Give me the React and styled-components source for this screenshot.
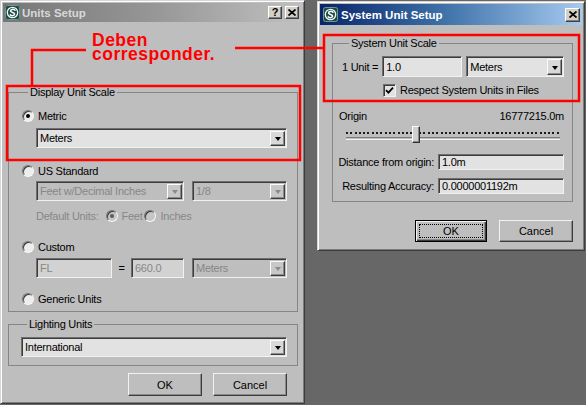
import React from "react";
import styled, { createGlobalStyle } from "styled-components";

const GlobalStyle = createGlobalStyle`
  html, body { margin: 0; padding: 0; }
  body {
    background: #676767;
    font-family: "Liberation Sans", Arial, sans-serif;
  }
`;

const DIALOG = "#bebebe";
const FIELD = "#e2e2e2";
const DIM = "#878787";

const Desktop = styled.div`
  position: relative;
  width: 586px;
  height: 405px;
  overflow: hidden;
  display: flex;
  align-items: flex-start;
  gap: 12px;
  background: #676767;
`;

const Window = styled.div`
  box-sizing: border-box;
  flex: none;
  width: ${(p) => p.$w}px;
  height: ${(p) => p.$h}px;
  margin-top: ${(p) => p.$top || 0}px;
  background: ${DIALOG};
  border: 1px solid;
  border-color: #d6d6d6 #3c3c3c #3c3c3c #d6d6d6;
  box-shadow: inset 1px 1px 0 #fff, inset -1px -1px 0 #7c7c7c;
  padding: 2px;
  display: flex;
  flex-direction: column;
  font-size: 11px;
  letter-spacing: -0.25px;
  color: #000;
  overflow: hidden;
`;

const TitleBar = styled.div`
  flex: none;
  height: ${(p) => p.$h}px;
  display: flex;
  align-items: center;
  gap: ${(p) => p.$gap}px;
  padding: 0 ${(p) => p.$padR}px 0 ${(p) => p.$padL}px;
  background: ${(p) =>
    p.$active
      ? "linear-gradient(90deg, #0a246a 0%, #3a6ea5 45%, #a6caf0 100%)"
      : "linear-gradient(90deg, #777 0%, #969696 50%, #c0c0c0 100%)"};
  color: ${(p) => (p.$active ? "#fff" : "#d8d8d8")};
`;

const TitleText = styled.span`
  font: bold 11.5px "Liberation Sans", Arial, sans-serif;
  letter-spacing: 0;
  flex: 1;
  white-space: nowrap;
`;

const TitleButtons = styled.div`
  display: flex;
  gap: 3px;
`;

const TitleButton = styled.span`
  box-sizing: border-box;
  width: ${(p) => p.$w}px;
  height: ${(p) => p.$h}px;
  display: flex;
  align-items: center;
  justify-content: center;
  background: #d4d0c8;
  border: 1px solid;
  border-color: #fff #404040 #404040 #fff;
  box-shadow: inset -1px -1px 0 #808080;
  color: #000;
  font: bold 11px "Liberation Sans", Arial, sans-serif;
  line-height: 1;
`;

const Body = styled.div`
  flex: 1;
  display: flex;
  flex-direction: column;
  padding: ${(p) => p.$pad};
`;

const Group = styled.fieldset`
  margin: ${(p) => p.$mt || 0}px 0 0 0;
  padding: ${(p) => p.$pad};
  border: 1px solid #868686;
  display: flex;
  flex-direction: column;
  min-width: 0;
`;

const Legend = styled.legend`
  padding: 0 2px;
  margin-left: ${(p) => p.$ml || 0}px;
  line-height: 13px;
`;

const RadioRow = styled.div`
  display: flex;
  align-items: center;
  gap: 4px;
  height: 14px;
  margin-top: ${(p) => p.$mt || 0}px;
  color: ${(p) => (p.$dim ? DIM : "#000")};
`;

const Radio = styled.span`
  box-sizing: border-box;
  flex: none;
  width: 12px;
  height: 12px;
  border-radius: 50%;
  background: ${(p) => (p.$dim ? "#c6c6c6" : "#ededed")};
  border: 1px solid;
  border-color: #767676 #f6f6f6 #f6f6f6 #767676;
  box-shadow: inset 1px 1px 0 #3a3a3a;
  display: flex;
  align-items: center;
  justify-content: center;
  &::after {
    content: "";
    display: ${(p) => (p.$checked ? "block" : "none")};
    width: 4px;
    height: 4px;
    border-radius: 50%;
    background: ${(p) => (p.$dim ? "#5a5a5a" : "#000")};
  }
`;

const Indent = styled.div`
  display: flex;
  align-items: center;
  gap: ${(p) => (p.$gap === undefined ? 8 : p.$gap)}px;
  height: ${(p) => (p.$h ? `${p.$h}px` : "auto")};
  margin: ${(p) => p.$mt || 0}px 0 0 ${(p) => (p.$ml === undefined ? 14 : p.$ml)}px;
  color: ${(p) => (p.$dim ? DIM : "#000")};
`;

const Field = styled.div`
  box-sizing: border-box;
  display: flex;
  align-items: center;
  height: ${(p) => p.$h || 20}px;
  width: ${(p) => (p.$w ? `${p.$w}px` : "auto")};
  flex: ${(p) => (p.$w ? "none" : 1)};
  margin-left: ${(p) => p.$ml || 0}px;
  padding-left: 3px;
  border: 1px solid;
  border-color: #6e6e6e #f2f2f2 #f2f2f2 #6e6e6e;
  box-shadow: inset 1px 1px 0 #3c3c3c;
  background: ${(p) => (p.$dim ? (p.$edit ? "#d2d2d2" : DIALOG) : FIELD)};
  color: ${(p) => (p.$dim ? DIM : "#000")};
  white-space: nowrap;
  overflow: hidden;
`;

const ArrowButton = styled.span`
  box-sizing: border-box;
  margin-left: auto;
  margin-right: 1px;
  width: 15px;
  height: calc(100% - 3px);
  margin-top: 1px;
  display: flex;
  align-items: center;
  justify-content: center;
  background: ${(p) => (p.$dim ? "#c8c8c8" : "#d9d9d9")};
  border: 1px solid;
  border-color: #fbfbfb #3e3e3e #3e3e3e #fbfbfb;
  box-shadow: inset -1px -1px 0 #8a8a8a;
  &::after {
    content: "";
    border-left: 3.5px solid transparent;
    border-right: 3.5px solid transparent;
    border-top: 4px solid ${(p) => (p.$dim ? "#8a8a8a" : "#000")};
    margin-top: 1px;
  }
`;

const Equals = styled.span`
  width: 19px;
  text-align: center;
  color: #000;
`;

const Dim = styled.span`
  color: ${DIM};
  margin: 0 ${(p) => p.$mr || 0}px 0 ${(p) => p.$ml || 0}px;
`;

const ButtonRow = styled.div`
  display: flex;
  justify-content: flex-end;
  gap: ${(p) => p.$gap}px;
  margin-top: ${(p) => p.$mt}px;
  padding-right: ${(p) => p.$pr}px;
`;

const Button = styled.button`
  box-sizing: border-box;
  width: ${(p) => p.$w}px;
  height: ${(p) => p.$h}px;
  padding: 0;
  font: 11px "Liberation Sans", Arial, sans-serif;
  color: #000;
  background: ${DIALOG};
  border: 1px solid;
  border-color: ${(p) =>
    p.$default ? "#000" : "#f2f2f2 #3c3c3c #3c3c3c #f2f2f2"};
  box-shadow: ${(p) =>
    p.$default
      ? "inset 1px 1px 0 #f2f2f2, inset -1px -1px 0 #3c3c3c, inset -2px -2px 0 #8a8a8a"
      : "inset -1px -1px 0 #8a8a8a"};
  outline: ${(p) => (p.$default ? "1px dotted #000" : "none")};
  outline-offset: -5px;
`;

const UnitRow = styled.div`
  display: flex;
  align-items: center;
  gap: 4px;
`;

const CheckRow = styled.div`
  display: flex;
  align-items: center;
  gap: 4px;
  height: 14px;
  margin: 6px 0 0 41px;
`;

const CheckBox = styled.span`
  box-sizing: border-box;
  width: 13px;
  height: 13px;
  flex: none;
  display: flex;
  align-items: center;
  justify-content: center;
  background: ${FIELD};
  border: 1px solid;
  border-color: #6e6e6e #f2f2f2 #f2f2f2 #6e6e6e;
  box-shadow: inset 1px 1px 0 #3c3c3c;
`;

const OriginRow = styled.div`
  display: flex;
  justify-content: space-between;
  height: 14px;
  line-height: 14px;
  margin: 12px 0 0 -3px;
`;

const Slider = styled.div`
  position: relative;
  height: 17px;
  margin: 3px 4px 0 4px;
  display: flex;
  flex-direction: column;
`;

const Ticks = styled.div`
  height: 2px;
  margin-top: 6px;
  background: repeating-linear-gradient(90deg, #1a1a1a 0 2px, transparent 2px 4.3px);
`;

const Track = styled.div`
  height: 1px;
  margin-top: 3px;
  border-top: 1px solid #7a7a7a;
  border-bottom: 1px solid #f2f2f2;
`;

const Thumb = styled.span`
  position: absolute;
  top: 0;
  left: ${(p) => p.$at}px;
  box-sizing: border-box;
  width: 8px;
  height: 17px;
  background: #cfcfcf;
  border: 1px solid;
  border-color: #fafafa #2e2e2e #2e2e2e #fafafa;
  box-shadow: inset -1px -1px 0 #868686;
`;

const FormGrid = styled.div`
  display: grid;
  grid-template-columns: 97px 1fr;
  column-gap: 4px;
  row-gap: 8px;
  align-items: center;
  margin: 11px 0 0 -5px;
`;

const FormLabel = styled.span`
  justify-self: end;
  white-space: nowrap;
`;

const Overlay = styled.div`
  position: absolute;
  inset: 0;
  pointer-events: none;
`;

const Note = styled.div`
  position: absolute;
  left: 92px;
  top: 33px;
  color: #ff0000;
  font: bold 17.5px/14px "Liberation Sans", Arial, sans-serif;
  letter-spacing: 0.5px;
`;

const MaxIcon = () => (
  <svg width="15" height="15" viewBox="0 0 15 15">
    <rect x="0" y="0" width="15" height="15" rx="2" fill="#1d4c47" />
    <rect x="0.5" y="0.5" width="14" height="14" rx="2" fill="none" stroke="#6f9893" />
    <circle cx="7.5" cy="7.5" r="5.2" fill="none" stroke="#eef4f3" strokeWidth="1.3" />
    <path
      d="M10 5.2 C8.6 3.8 5.4 4.2 5.6 6.2 C5.8 7.8 9.6 7.2 9.6 9.1 C9.6 10.9 6.6 11.1 5.2 9.9"
      fill="none"
      stroke="#fff"
      strokeWidth="1.5"
      strokeLinecap="round"
    />
  </svg>
);

const CloseGlyph = () => (
  <svg width="8" height="7" viewBox="0 0 8 7">
    <path d="M0.5 0.5 L7.5 6.5 M7.5 0.5 L0.5 6.5" stroke="#000" strokeWidth="1.7" />
  </svg>
);

const CheckGlyph = () => (
  <svg width="9" height="9" viewBox="0 0 9 9">
    <path d="M1 4.2 L3.4 6.6 L8 1.6" fill="none" stroke="#000" strokeWidth="1.8" />
  </svg>
);

const Combo = ({ value, w, h, dim, ml }) => (
  <Field $w={w} $h={h} $dim={dim} $ml={ml}>
    {value}
    <ArrowButton $dim={dim} />
  </Field>
);

const UnitsSetup = () => (
  <Window $w={305} $h={404}>
    <TitleBar $h={19} $gap={2} $padL={2} $padR={3}>
      <MaxIcon />
      <TitleText>Units Setup</TitleText>
      <TitleButtons>
        <TitleButton $w={14} $h={13}>?</TitleButton>
        <TitleButton $w={14} $h={13}>
          <CloseGlyph />
        </TitleButton>
      </TitleButtons>
    </TitleBar>
    <Body $pad="64px 4px 0 5px">
      <Group $pad="10px 10px 5px 13px">
        <Legend $ml={6}>Display Unit Scale</Legend>
        <RadioRow>
          <Radio $checked />
          Metric
        </RadioRow>
        <Indent $mt={5}>
          <Combo value="Meters" />
        </Indent>
        <RadioRow $mt={16}>
          <Radio />
          US Standard
        </RadioRow>
        <Indent $mt={3}>
          <Combo dim w={148} value="Feet w/Decimal Inches" />
          <Combo dim value="1/8" />
        </Indent>
        <Indent $mt={8} $gap={0} $h={14} $dim>
          <Dim $mr={7}>Default Units:</Dim>
          <Radio $dim $checked />
          <Dim $ml={4} $mr={1}>Feet</Dim>
          <Radio $dim />
          <Dim $ml={5}>Inches</Dim>
        </Indent>
        <RadioRow $mt={17}>
          <Radio />
          Custom
        </RadioRow>
        <Indent $mt={4} $gap={0}>
          <Field $w={76} $dim $edit>FL</Field>
          <Equals>=</Equals>
          <Field $w={53} $dim $edit>660.0</Field>
          <Combo dim ml={8} value="Meters" />
        </Indent>
        <RadioRow $mt={14}>
          <Radio />
          Generic Units
        </RadioRow>
      </Group>
      <Group $mt={6} $pad="6px 10px 8px 12px">
        <Legend $ml={6}>Lighting Units</Legend>
        <Indent $ml={0}>
          <Combo value="International" />
        </Indent>
      </Group>
      <ButtonRow $gap={11} $mt={7} $pr={11}>
        <Button $w={74} $h={23}>OK</Button>
        <Button $w={74} $h={23}>Cancel</Button>
      </ButtonRow>
    </Body>
  </Window>
);

const SystemUnitSetup = () => (
  <Window $w={268} $h={250} $top={1}>
    <TitleBar $active $h={21} $gap={3} $padL={3} $padR={2}>
      <MaxIcon />
      <TitleText>System Unit Setup</TitleText>
      <TitleButton $w={15} $h={14}>
        <CloseGlyph />
      </TitleButton>
    </TitleBar>
    <Body $pad="12px 9px 0 12px">
      <Group $pad="6px 8px 7px 9px">
        <Legend $ml={7}>System Unit Scale</Legend>
        <UnitRow>
          <span>1 Unit =</span>
          <Field $w={80} $h={21}>1.0</Field>
          <Combo h={21} value="Meters" />
        </UnitRow>
        <CheckRow>
          <CheckBox>
            <CheckGlyph />
          </CheckBox>
          Respect System Units in Files
        </CheckRow>
        <OriginRow>
          <span>Origin</span>
          <span>16777215.0m</span>
        </OriginRow>
        <Slider>
          <Ticks />
          <Track />
          <Thumb $at={66} />
        </Slider>
        <FormGrid>
          <FormLabel>Distance from origin:</FormLabel>
          <Field $h={16}>1.0m</Field>
          <FormLabel>Resulting Accuracy:</FormLabel>
          <Field $h={16}>0.0000001192m</Field>
        </FormGrid>
      </Group>
      <ButtonRow $gap={12} $mt={18} $pr={0}>
        <Button $default $w={72} $h={22}>OK</Button>
        <Button $w={74} $h={22}>Cancel</Button>
      </ButtonRow>
    </Body>
  </Window>
);

const Annotation = () => (
  <Overlay>
    <svg width="586" height="405" viewBox="0 0 586 405">
      <g fill="none" stroke="#ff0000" strokeWidth="2.5">
        <path d="M86 50 H32 V85" />
        <path d="M235 48 H323" />
        <rect x="7" y="86" width="293" height="74" />
        <rect x="324" y="35" width="255" height="66" />
      </g>
    </svg>
    <Note>
      Deben
      <br />
      corresponder.
    </Note>
  </Overlay>
);

export default function App() {
  return (
    <>
      <GlobalStyle />
      <Desktop>
        <UnitsSetup />
        <SystemUnitSetup />
        <Annotation />
      </Desktop>
    </>
  );
}
